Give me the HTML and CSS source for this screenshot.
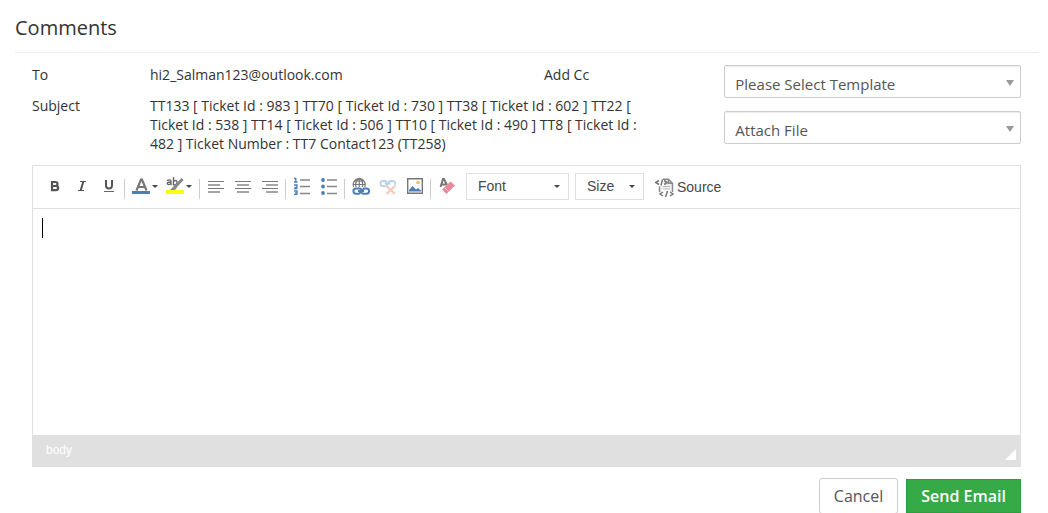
FILE: index.html
```
<!DOCTYPE html>
<html lang="en">
<head>
    <meta charset="UTF-8">
    <meta name="viewport" content="width=device-width, initial-scale=1.0">
    <title>Comments</title>
    <link rel="stylesheet" href="styles.css">
</head>
<body>
    <div class="comments-container">
        <h2>Comments</h2>

        <form class="email-form">
            <!-- Mail header -->
            <div class="mail-header">
                <div class="mail-fields">
                    <div class="field-row">
                        <span class="field-name">To</span>
                        <span class="field-value">hi2_Salman123@outlook.com</span>
                        <a href="#" class="add-cc">Add Cc</a>
                    </div>
                    <div class="field-row">
                        <span class="field-name">Subject</span>
                        <span class="field-value">TT133 [ Ticket Id : 983 ] TT70 [ Ticket Id : 730 ] TT38 [ Ticket Id : 602 ] TT22 [ Ticket Id : 538 ] TT14 [ Ticket Id : 506 ] TT10 [ Ticket Id : 490 ] TT8 [ Ticket Id : 482 ] Ticket Number : TT7 Contact123 (TT258)</span>
                    </div>
                </div>
                <div class="mail-options">
                    <div class="select-box">
                        <select name="template" aria-label="Template">
                            <option>Please Select Template</option>
                        </select>
                    </div>
                    <div class="select-box">
                        <select name="attachment" aria-label="Attachment">
                            <option>Attach File</option>
                        </select>
                    </div>
                </div>
            </div>

            <!-- Editor -->
            <div class="editor">
                <div class="toolbar">
                    <button type="button" class="tool" aria-label="Bold">
                        <svg width="16" height="16" viewBox="0 0 16 16"><path d="M5 4h3.500a1.900 1.900 0 0 1 0 4H5zM5 8h4a2.100 2.100 0 0 1 0 4.200H5z" fill="none" stroke="#555" stroke-width="2.200"/></svg>
                    </button>
                    <button type="button" class="tool" aria-label="Italic">
                        <svg width="16" height="16" viewBox="0 0 16 16"><path d="M6 3.500h6M4 12.500h6" stroke="#555" stroke-width="1"/><path d="M9.300 3.500L6.700 12.500" stroke="#555" stroke-width="2"/></svg>
                    </button>
                    <button type="button" class="tool" aria-label="Underline">
                        <svg width="16" height="16" viewBox="0 0 16 16"><path d="M5 2v5.500a3 3 0 0 0 6 0V2" fill="none" stroke="#555" stroke-width="2"/><path d="M3 13.500h10" stroke="#666"/></svg>
                    </button>
                    <span class="separator"></span>
                    <button type="button" class="tool tool-menu" aria-label="Text color">
                        <svg width="18" height="18" viewBox="0 0 18 18"><path d="M4.500 13.500L9 2.500h1L14.500 13.500M6 10h7" fill="none" stroke="#777" stroke-width="2.200"/><path d="M0 14h18v3H0z" fill="#4a7fba"/></svg>
                        <span class="arrow"></span>
                    </button>
                    <button type="button" class="tool tool-menu" aria-label="Background color">
                        <svg width="18" height="18" viewBox="0 0 18 18"><path d="M1 3.500q4-1.500 4 .8V8M5 5.200H2.500q-2.500 1.400 0 2.400L5 7M7.500 0v8M7.500 4q4-1.500 3.500 1.500T7.500 8" fill="none" stroke="#666" stroke-width="1.400"/><path d="M16.500 2L9.500 9.500" stroke="#888" stroke-width="3"/><path d="M9 8L4 13h5l2-2.500z" fill="#888"/><path d="M0 13h18v4H0z" fill="#ffff14"/></svg>
                        <span class="arrow"></span>
                    </button>
                    <span class="separator"></span>
                    <button type="button" class="tool" aria-label="Align left">
                        <svg width="16" height="16" viewBox="0 0 16 16"><path d="M0 3.500h16M0 10.500h16" stroke="#777"/><path d="M0 7h12M0 14h12" stroke="#888" stroke-width="1.500"/></svg>
                    </button>
                    <button type="button" class="tool" aria-label="Center">
                        <svg width="16" height="16" viewBox="0 0 16 16"><path d="M0 3.500h16M0 10.500h16" stroke="#777"/><path d="M2 7h12M2 14h12" stroke="#888" stroke-width="1.500"/></svg>
                    </button>
                    <button type="button" class="tool" aria-label="Align right">
                        <svg width="16" height="16" viewBox="0 0 16 16"><path d="M0 3.500h16M0 10.500h16" stroke="#777"/><path d="M4 7h12M4 14h12" stroke="#888" stroke-width="1.500"/></svg>
                    </button>
                    <span class="separator"></span>
                    <button type="button" class="tool" aria-label="Numbered list">
                        <svg width="16" height="18" viewBox="0 0 16 18"><path d="M0 1.500h1.800V5M0 5h3.500M0 8h3v1.800L0 11.500h3.500M0 14h3v3.500H0M1 15.800h2" fill="none" stroke="#4a7fba" stroke-width="1.300"/><path d="M6 3h10M6 9.500h10M6 16.500h10" stroke="#888" stroke-width="1.400"/></svg>
                    </button>
                    <button type="button" class="tool" aria-label="Bulleted list">
                        <svg width="16" height="18" viewBox="0 0 16 18"><g fill="#4a7fba"><circle cx="2" cy="3" r="1.900"/><circle cx="2" cy="9.500" r="1.900"/><circle cx="2" cy="16" r="1.900"/></g><path d="M6 3h10M6 9.500h10M6 16.500h10" stroke="#888" stroke-width="1.400"/></svg>
                    </button>
                    <span class="separator"></span>
                    <button type="button" class="tool" aria-label="Link">
                        <svg width="18" height="18" viewBox="0 0 18 18"><g fill="none" stroke="#777" stroke-width="1.200"><path d="M1.700 10a6 6 0 1 1 11 0M1.500 7.500h12M2.500 4h9.500M7.200 1v9"/><path d="M7.200 1q-5 4-3 9M7.200 1q5 4 3 9"/></g><path d="M10 13L8 11.500H4a2.600 2.600 0 0 0 0 5.200h3l2-2M9 15.500l2 1.200h3.500a2.600 2.600 0 0 0 0-5.200H12l-2 2M6 14h6" fill="none" stroke="#4a7fba" stroke-width="2"/></svg>
                    </button>
                    <button type="button" class="tool" aria-label="Unlink">
                        <svg width="18" height="18" viewBox="0 0 18 18"><path d="M8 6L6.500 4H4a2.600 2.600 0 0 0 0 5.200h3l2-2M9 5.500L11 4h2.500a2.600 2.600 0 0 1 2 4.500M5.500 6.600h6" fill="none" stroke="#bdd0e5" stroke-width="1.800"/><path d="M7.500 9l8.500 8M16 9l-8.500 8" stroke="#f8c9bc" stroke-width="2.400"/></svg>
                    </button>
                    <button type="button" class="tool" aria-label="Image">
                        <svg width="16" height="18" viewBox="0 0 16 18"><path d="M.7 1.700h14.600v14.600H.7z" fill="#fff" stroke="#777" stroke-width="1.400"/><path d="M2 13l3.500-4 3.500 3.500 2-1.500 3 2.500v1H2z" fill="#4a7fba"/><circle cx="11" cy="5.500" r="1.800" fill="#f5bd67"/></svg>
                    </button>
                    <span class="separator"></span>
                    <button type="button" class="tool" aria-label="Remove format">
                        <svg width="18" height="18" viewBox="0 0 18 18"><path d="M2.500 10L5 2h1l3 6M3.500 7.500H8" fill="none" stroke="#777" stroke-width="2"/><path d="M12.500 4.500l4.500 4-8.500 8.500-4.500-4.500z" fill="#e8899c"/><path d="M6.500 10.500l4 4" stroke="#f7c9d2"/></svg>
                    </button>
                    <button type="button" class="combo combo-font">Font <span class="arrow"></span></button>
                    <button type="button" class="combo">Size <span class="arrow"></span></button>
                    <button type="button" class="source-btn">
                        <svg width="19" height="19" viewBox="0 0 19 19"><path d="M9 1h4.500L18 5.500V14h-3V11H7v4H4V8h5z" fill="#eee"/><path d="M8 1.200h5.500l4 4V14M4.500 8.500V14M13.500 1.200v4h4" fill="none" stroke="#888" stroke-width="1.400"/><path d="M8 8.500h7M8 11h7" stroke="#bbb"/><path d="M4 2.500L.8 4.500l3.200 2M7.500 1.500L6 7.500M9 2.500l3.200 2-3.200 2M8 14l-3 2 3 2M12.500 13l-2 6M15 14l3 2-3 2" fill="none" stroke="#777" stroke-width="1.500"/></svg>
                        Source
                    </button>
                </div>
                <div class="editor-content">
                    <textarea name="message" aria-label="Message"></textarea>
                    <span class="caret"></span>
                </div>
                <div class="editor-footer">
                    <a href="#" class="path-item">body</a>
                    <span class="resizer"></span>
                </div>
            </div>

            <div class="form-actions">
                <button type="button" class="cancel-btn">Cancel</button>
                <button type="submit" class="send-btn">Send Email</button>
            </div>
        </form>
    </div>
</body>
</html>
```

FILE: styles.css
```
body {
    font-family: "Open Sans", sans-serif;
    font-size: 14px;
    line-height: 19px;
    color: #333;
    background-color: #fff;
    margin: 0;
    overflow: hidden;
}

.comments-container {
    padding: 14px 10px 0 15px;
}

h2 {
    font-size: 20px;
    font-weight: normal;
    line-height: 28px;
    margin: 0;
    padding-bottom: 10px;
    border-bottom: 1px solid #eee;
}

a {
    color: inherit;
    text-decoration: none;
}

button, select, textarea {
    font-family: inherit;
    box-sizing: border-box;
    margin: 0;
}

button {
    cursor: pointer;
}

.email-form {
    padding: 12px 17px 0;
}

/* Mail header */
.mail-header {
    display: flex;
    justify-content: space-between;
    margin-bottom: 12px;
}

.mail-fields {
    flex: 0 1 620px;
}

.field-row {
    display: flex;
    margin-bottom: 12px;
}

.field-row:last-child {
    margin-bottom: 0;
}

.field-name {
    flex: 0 0 118px;
}

.field-value {
    flex: 0 1 500px;
}

.field-row:first-child .field-value {
    flex-basis: 394px;
}

.mail-options {
    flex: 0 0 30%;
    display: flex;
    flex-direction: column;
    gap: 13px;
}

.select-box {
    position: relative;
}

.select-box::after {
    content: "";
    position: absolute;
    top: 15px;
    right: 7px;
    border: 4px solid transparent;
    border-top: 6px solid #999;
    border-bottom: 0;
    pointer-events: none;
}

.select-box select {
    appearance: none;
    display: block;
    width: 100%;
    height: 33px;
    padding: 4px 20px 0 10px;
    font-size: 15px;
    color: #555;
    background-color: #fff;
    border: 1px solid #ccc;
    border-radius: 2px;
    box-shadow: inset 0 1px 1px rgba(0, 0, 0, 0.075);
}

/* Editor */
.editor {
    border: 1px solid #e0e0e0;
}

.toolbar {
    display: flex;
    align-items: center;
    box-sizing: border-box;
    height: 43px;
    padding: 0 0 2px 8px;
    border-bottom: 1px solid #e0e0e0;
}

.tool {
    display: flex;
    align-items: center;
    justify-content: center;
    gap: 2px;
    width: 27px;
    height: 28px;
    padding: 0;
    border: none;
    background: none;
}

.tool-menu {
    width: 34px;
}

.separator {
    width: 1px;
    height: 20px;
    margin: 6px 2px 0;
    background-color: #ccc;
}

.tool-menu + .separator {
    margin-left: 3px;
}

.separator + .tool-menu {
    margin-left: 1px;
}

.arrow {
    border: 3px solid transparent;
    border-top-color: #444;
    border-bottom: 0;
}

.combo {
    display: flex;
    align-items: center;
    justify-content: space-between;
    width: 69px;
    height: 27px;
    margin-left: 6px;
    padding: 0 8px 0 11px;
    font-family: "Liberation Sans", Arial, sans-serif;
    font-size: 14px;
    color: #484848;
    background-color: #fff;
    border: 1px solid #e0e0e0;
}

.combo-font {
    width: 103px;
}

.source-btn {
    display: flex;
    align-items: center;
    gap: 3px;
    margin-left: 11px;
    padding: 2px 0 0;
    font-family: "Liberation Sans", Arial, sans-serif;
    font-size: 14px;
    color: #484848;
    border: none;
    background: none;
}

.editor-content {
    position: relative;
}

.editor-content textarea {
    display: block;
    width: 100%;
    height: 226px;
    padding: 9px;
    font-size: 14px;
    border: none;
    outline: none;
    resize: none;
}

.caret {
    position: absolute;
    top: 9px;
    left: 9px;
    width: 1px;
    height: 20px;
    background-color: #000;
}

.editor-footer {
    display: flex;
    align-items: center;
    justify-content: space-between;
    height: 31px;
    padding: 0 4px 0 13px;
    background-color: #e0e0e0;
}

.path-item {
    font-family: "Liberation Sans", Arial, sans-serif;
    font-size: 12px;
    color: #fff;
}

.resizer {
    align-self: flex-end;
    margin-bottom: 6px;
    border-left: 11px solid transparent;
    border-bottom: 11px solid #fff;
}

.form-actions {
    display: flex;
    align-items: center;
    justify-content: flex-end;
    gap: 8px;
    padding-top: 11px;
}

.cancel-btn, .send-btn {
    font-size: 16px;
    line-height: 22px;
}

.cancel-btn {
    padding: 6px 14px;
    color: #555;
    background-color: #fff;
    border: 1px solid #ccc;
    border-radius: 3px;
}

.send-btn {
    padding: 5px 14px;
    font-weight: 600;
    color: #fff;
    background-color: #35aa47;
    border: 1px solid #2f9e41;
}
```
